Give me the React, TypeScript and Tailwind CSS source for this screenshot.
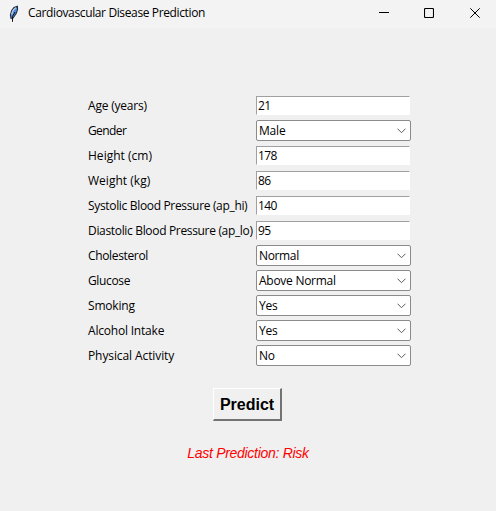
type Field = {
  label: string;
  value: string;
  select?: boolean;
  labelClass: string;
  valueClass?: string;
};

const fields: Field[] = [
  { label: 'Age (years)', value: '21', labelClass: 'tracking-[-0.2px]' },
  { label: 'Gender', value: 'Male', select: true, labelClass: 'tracking-[-0.6px]' },
  { label: 'Height (cm)', value: '178', labelClass: 'tracking-[0.02px]' },
  { label: 'Weight (kg)', value: '86', labelClass: 'tracking-[0.02px]' },
  { label: 'Systolic Blood Pressure (ap_hi)', value: '140', labelClass: 'tracking-[-0.33px]' },
  { label: 'Diastolic Blood Pressure (ap_lo)', value: '95', labelClass: 'tracking-[-0.33px]' },
  { label: 'Cholesterol', value: 'Normal', select: true, labelClass: 'tracking-[-0.35px]', valueClass: 'tracking-[-0.35px]' },
  { label: 'Glucose', value: 'Above Normal', select: true, labelClass: 'tracking-[-0.35px]', valueClass: 'tracking-[-0.27px]' },
  { label: 'Smoking', value: 'Yes', select: true, labelClass: 'tracking-[-0.2px]' },
  { label: 'Alcohol Intake', value: 'Yes', select: true, labelClass: 'tracking-[-0.2px]' },
  { label: 'Physical Activity', value: 'No', select: true, labelClass: 'tracking-[-0.1px]' },
];

function Feather() {
  return (
    <svg width="12" height="18" viewBox="0 0 12 18" className="shrink-0">
      <path d="M9.4 1.2L6 2.4L3.6 5.8L2.4 10L3 13.4L5 13L8.2 8.6L9.6 4.4Z" fill="#4a8ae6" stroke="#26303c" strokeWidth="1.1" />
      <path d="M7.8 2.6L5 5.6L3.6 9.5" fill="none" stroke="#c3cdd8" strokeWidth="1.2" />
      <path d="M7 7L4.5 11.5V16.8" fill="none" stroke="#111" strokeWidth="1" />
    </svg>
  );
}

function TitleBar() {
  return (
    <header className="flex h-7 items-center bg-[#f3f3f3] pl-2">
      <div className="flex h-6 w-5 items-center">
        <Feather />
      </div>
      <span className="flex h-[26px] items-center self-start text-[12px] tracking-[-0.37px] whitespace-pre">Cardiovascular Disease Prediction</span>
      <div className="mr-4 ml-auto flex items-center gap-[35px] self-start pt-[7px]">
        <svg width="10" height="11" viewBox="0 0 10 11"><path d="M0 5.5H10" stroke="#000" /></svg>
        <svg width="10" height="10" viewBox="0 0 10 10"><rect x=".5" y=".5" width="9" height="9" rx="1" fill="none" stroke="#000" strokeWidth="1.1" /></svg>
        <svg width="10" height="10" viewBox="0 0 10 10" className="ml-px"><path d="M.3.3L9.7 9.7M9.7.3L.3 9.7" stroke="#000" /></svg>
      </div>
    </header>
  );
}

function Control({ field }: { field: Field }) {
  if (field.select) {
    return (
      <div className="flex h-[21px] w-[155px] items-center justify-between rounded-[2px] border border-[#8b8b8b] bg-white pr-1 pl-[2px]">
        <span className={field.valueClass ?? 'tracking-[-0.2px]'}>{field.value}</span>
        <svg width="9" height="6" viewBox="0 0 9 6" className="mt-px"><path d="M.5.7L4.5 4.7L8.5.7" fill="none" stroke="#5c5c5c" /></svg>
      </div>
    );
  }
  return (
    <div className="flex h-[19px] w-[154px] items-center border border-t-[#a0a0a0] border-r-white border-b-white border-l-[#a0a0a0] bg-white pl-px">
      <span className={field.valueClass ?? 'tracking-[-0.6px]'}>{field.value}</span>
    </div>
  );
}

export default function App() {
  return (
    <div className="flex h-[511px] w-[496px] flex-col overflow-hidden bg-[#f0f0f0] font-['Open_Sans',sans-serif] text-[12px] leading-4 text-black">
      <TitleBar />
      <main className="flex flex-col items-center pt-[65px]">
        <div className="ml-[88px] flex w-[323px] flex-col self-start">
          {fields.map((field) => (
            <div key={field.label} className="flex h-[25px] items-center">
              <div className="w-[168px] shrink-0 whitespace-pre">
                <span className={field.labelClass}>{field.label}</span>
              </div>
              <Control field={field} />
            </div>
          ))}
        </div>
        <button className="mt-5 mr-px flex h-[33px] w-[69px] items-center justify-center border-t border-r-2 border-b-2 border-l border-t-white border-r-[#737373] border-b-[#737373] border-l-white pt-[2px] font-['Liberation_Sans',Arial,sans-serif] text-[16px] font-bold">
          Predict
        </button>
        <p className="mt-6 font-['Liberation_Sans',Arial,sans-serif] text-[14px] tracking-[-0.29px] whitespace-pre text-[#ff0000] italic">Last Prediction: Risk</p>
      </main>
    </div>
  );
}
